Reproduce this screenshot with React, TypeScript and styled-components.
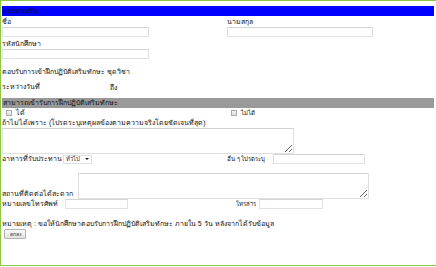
import React from "react";
import styled, { createGlobalStyle } from "styled-components";

const Global = createGlobalStyle`
  html, body { margin: 0; padding: 0; background: #fff; }
  body { font-family: Tahoma, sans-serif; font-size: 7px; color: #111; }
  * { box-sizing: border-box; }
`;

const Frame = styled.div`
  width: 436px;
  height: 266px;
  border-top: 1px solid #8dc63f;
  border-left: 1px solid #8dc63f;
  border-bottom: 1px solid #8dc63f;
  padding: 5px 2px 0 1px;
`;

const Bar = styled.div<{ $tone: "blue" | "gray" }>`
  height: 10px;
  line-height: 10px;
  padding-left: 1px;
  background: ${(p) => (p.$tone === "blue" ? "#0000ff" : "#999999")};
  color: #111;
`;

const Grid = styled.div`
  display: grid;
  grid-template-columns: 225px 1fr;
  align-items: end;
`;

const Field = styled.div`
  display: flex;
  flex-direction: column;
`;

const Label = styled.span<{ $w?: number; $pl?: number; $small?: boolean }>`
  display: block;
  flex: none;
  height: 10px;
  line-height: 10px;
  white-space: nowrap;
  ${(p) => (p.$w ? `width: ${p.$w}px;` : "")}
  ${(p) => (p.$pl ? `padding-left: ${p.$pl}px;` : "")}
  ${(p) => (p.$small ? "font-size: 6px;" : "")}
`;

const TextInput = styled.input<{ $w: number }>`
  width: ${(p) => p.$w}px;
  height: 10px;
  border: 1px solid #e2e2e2;
  border-top-color: #d4d4d4;
  padding: 0;
  margin: 0;
  background: #fff;
  font-size: 8px;
`;

const Line = styled.div<{ $mt?: number; $h?: number }>`
  display: flex;
  align-items: center;
  height: ${(p) => p.$h ?? 10}px;
  margin-top: ${(p) => p.$mt ?? 0}px;
  white-space: nowrap;
`;

const Check = styled.span`
  display: inline-block;
  width: 6px;
  height: 6px;
  border: 1px solid #aaa;
  background: linear-gradient(#f4f4f4, #dedede);
  margin: 0 4px 0 4px;
`;

const Area = styled.textarea<{ $w: number; $h: number }>`
  display: block;
  width: ${(p) => p.$w}px;
  height: ${(p) => p.$h}px;
  border: 1px solid #e0e0e0;
  border-top-color: #d2d2d2;
  padding: 0;
  margin: 0;
  resize: both;
  font-size: 8px;
`;

const Select = styled.span`
  display: inline-flex;
  align-items: center;
  justify-content: space-between;
  width: 29px;
  height: 9px;
  border: 1px solid #e0e0e0;
  padding: 0 2px;
  font-size: 6px;
  color: #333;
  &::after {
    content: "";
    border-left: 2px solid transparent;
    border-right: 2px solid transparent;
    border-top: 2px solid #222;
  }
`;

const AddressRow = styled.div`
  display: flex;
  align-items: flex-end;
  margin-top: 9px;
`;

const Button = styled.button`
  display: block;
  width: 22px;
  height: 10px;
  margin: 1px 0 0 2px;
  padding: 0;
  border: 1px solid #b5b5b5;
  border-radius: 1px;
  background: linear-gradient(#fafafa, #e2e2e2);
  font-size: 5px;
  line-height: 8px;
  color: #333;
  font-family: inherit;
`;

export default function App() {
  return (
    <>
      <Global />
      <Frame>
        <Bar $tone="blue">แบบตอบรับ</Bar>
        <Grid style={{ marginTop: 1 }}>
          <Field>
            <Label>ชื่อ</Label>
            <TextInput $w={147} />
          </Field>
          <Field>
            <Label>นามสกุล</Label>
            <TextInput $w={146} />
          </Field>
        </Grid>
        <Field style={{ marginTop: 2 }}>
          <Label>รหัสนักศึกษา</Label>
          <TextInput $w={147} />
        </Field>
        <Line $mt={7}>ตอบรับการเข้าฝึกปฏิบัติเสริมทักษะ ชุดวิชา</Line>
        <Line $mt={6}>
          <Label $w={108}>ระหว่างวันที่</Label>ถึง
        </Line>
        <Bar $tone="gray" style={{ marginTop: 6 }}>
          สามารถเข้ารับการฝึกปฏิบัติเสริมทักษะ
        </Bar>
        <Grid>
          <Line $h={9}>
            <Check />ได้
          </Line>
          <Line $h={9}>
            <Check />
            <Label $small>ไม่ได้</Label>
          </Line>
        </Grid>
        <Line $h={10}>ถ้าไม่ได้เพราะ (โปรดระบุเหตุผลข้องตามความจริงโดยชัดเจนที่สุด)</Line>
        <Area $w={292} $h={26} style={{ marginTop: 1 }} />
        <Grid>
          <Line>
            <Label $w={61}>อาหารที่รับประทาน</Label>
            <Select>ทั่วไป</Select>
          </Line>
          <Line>
            <Label $w={46} $small>
              อื่น ๆ โปรดระบุ
            </Label>
            <TextInput $w={92} />
          </Line>
        </Grid>
        <AddressRow>
          <Label $w={76}>สถานที่ติดต่อได้สะดวก</Label>
          <Area $w={291} $h={26} />
        </AddressRow>
        <Grid>
          <Line>
            <Label $w={63}>หมายเลขโทรศัพท์</Label>
            <TextInput $w={63} />
          </Line>
          <Line>
            <Label $w={32} $pl={9} $small>
              โทรสาร
            </Label>
            <TextInput $w={64} />
          </Line>
        </Grid>
        <Line $mt={9}>
          หมายเหตุ : ขอให้นักศึกษาตอบรับการฝึกปฏิบัติเสริมทักษะ ภายใน 5 วัน หลังจากได้รับข้อมูล
        </Line>
        <Button>ตกลง</Button>
      </Frame>
    </>
  );
}
